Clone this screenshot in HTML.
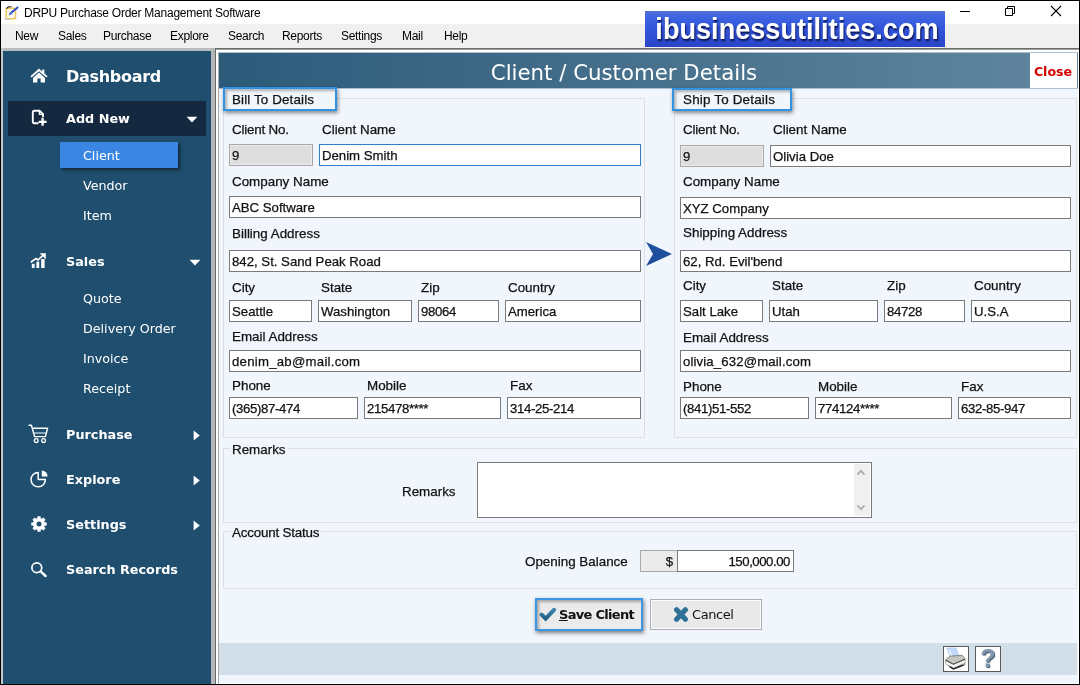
<!DOCTYPE html>
<html lang="en">
<head>
<meta charset="utf-8">
<title>DRPU Purchase Order Management Software</title>
<style>
*{box-sizing:border-box;margin:0;padding:0}
html,body{width:1080px;height:685px;overflow:hidden;background:#fff}
body{position:relative;will-change:transform;font-family:"Liberation Sans",sans-serif;font-size:13px;color:#000}
.abs{position:absolute}
#frame{position:absolute;left:0;top:0;width:1080px;height:685px;border:1px solid #000;pointer-events:none;z-index:50}
#titlebar{position:absolute;left:1px;top:1px;width:1079px;height:23px;background:#fff}
#title{position:absolute;left:23px;top:5px;font-size:12px;line-height:15px;letter-spacing:-0.25px;white-space:nowrap;color:#000}
#menubar{position:absolute;left:1px;top:24px;width:1079px;height:24px;background:#f0f0f0}
#menubar span{position:absolute;top:5px;font-size:12px;line-height:15px;letter-spacing:-0.3px;white-space:nowrap;color:#000}
#undermenu{position:absolute;left:1px;top:48px;width:1078px;height:3px;background:#b9bdc0}
#leftstrip{position:absolute;left:1px;top:48px;width:2px;height:636px;background:#c5c9cc}
#mainborder{position:absolute;left:215px;top:48px;width:864px;height:636px;border-left:1px solid #696969;border-top:1px solid #6c6c6c;background:#fff;box-shadow:inset 0 1px 0 #9c9c9c}
#banner{position:absolute;left:645px;top:11px;width:300px;height:36px;background:linear-gradient(#5672cc 0%,#4166e2 12%,#3357dc 45%,#2a45c6 100%);overflow:hidden}
#banner span{position:absolute;left:-7.6px;width:320px;text-align:center;top:0.2px;font-weight:bold;font-size:29.5px;line-height:36px;color:#fff;white-space:nowrap;text-shadow:1px 2px 2px #0a1550;transform:scaleX(0.919);transform-origin:50% 50%}
/* sidebar */
#sidebar{position:absolute;left:3px;top:51px;width:208px;height:633px;background:#1f4e6e}
.nav{position:absolute;left:63px;margin-top:1px;font-family:"DejaVu Sans","Liberation Sans",sans-serif;font-weight:bold;color:#fff;font-size:12.8px;line-height:16px;white-space:nowrap}
.sub{position:absolute;left:80px;margin-top:1px;font-family:"DejaVu Sans","Liberation Sans",sans-serif;color:#fff;font-size:12.7px;line-height:16px;white-space:nowrap}
/* main */
#split{position:absolute;left:211px;top:48px;width:4px;height:636px;background:#b4b8bb}
#main{position:absolute;left:219px;top:52px;width:859px;height:631px;background:#f1f6fd}
#header{position:absolute;left:0px;top:1px;width:859px;height:35px;background:linear-gradient(90deg,#2c5b7a 0%,#62869f 100%);box-shadow:0 -1px 0 rgba(70,110,140,.4),0 1px 0 rgba(70,110,140,.4)}
#header .ht{position:absolute;left:0;top:1px;width:810px;text-align:center;font-family:"DejaVu Sans","Liberation Sans",sans-serif;font-size:21.3px;line-height:37px;color:#fff;white-space:nowrap}
#closebtn{position:absolute;left:811px;top:0px;width:47px;height:35px;padding-right:1px;background:#fff;font-family:"DejaVu Sans","Liberation Sans",sans-serif;font-weight:bold;font-size:12.6px;color:#d40000;text-align:center;line-height:37px}
.gb{position:absolute;border:1px solid #dcdfe4}
.lbl{position:absolute;margin-top:0.6px;-webkit-text-stroke:0.25px #111;font-size:13.4px;line-height:16px;white-space:nowrap;color:#111}
.fld{position:absolute;-webkit-text-stroke:0.25px #111;height:22px;border:1px solid #7a7a7a;background:#fff;font-size:13.2px;line-height:22px;padding-left:2px;white-space:nowrap;overflow:hidden;color:#111}
.fld.gray{background:#dedede;border-color:#a8a8a8;box-shadow:inset 0 0 0 1px #ececec}
.fld.focus{border-color:#2f7ec6}
.legend{position:absolute;margin-top:0.6px;-webkit-text-stroke:0.25px #111;font-size:13.4px;line-height:16px;white-space:nowrap;color:#111;background:#f0f5fc;padding:0 2px}
.hl{position:absolute;border:2px solid #3392e2;box-shadow:1px 2px 4px rgba(0,0,0,.45),inset 2px 2px 3px rgba(0,0,0,.28);background:#f1f6fd}
#footer{position:absolute;left:0;top:591px;width:858px;height:31.6px;background:#d2dee8}
.btxt{margin-top:1px;font-family:"DejaVu Sans","Liberation Sans",sans-serif;font-size:13px;line-height:16px;white-space:nowrap;color:#111}
</style>
</head>
<body>
<div id="titlebar">
  <svg class="abs" style="left:1px;top:3px" width="18" height="17" viewBox="0 0 18 17">
    <path d="M4.2 4.2H12.4Q13.6 4.2 13.6 5.4V13.6Q13.6 14.8 12.4 14.8H5.2Q4 14.8 4 13.6Z" fill="#fbf6e6" stroke="#ecc95a" stroke-width="1.4"/>
    <path d="M4.6 4.6Q6.4 1.8 9.6 3" fill="none" stroke="#3a3a30" stroke-width="1.3"/>
    <path d="M15.6 3.4L8 9.8" stroke="#2a46c8" stroke-width="1.9" stroke-linecap="round"/>
    <path d="M9.2 8.2L6.6 11.8 10.4 10.2Z" fill="#6f8ee8"/>
    <path d="M2.2 14.6Q5 16.2 8 15.2" fill="none" stroke="#c9cde0" stroke-width="1.2"/>
  </svg>
  <div id="title">DRPU Purchase Order Management Software</div>
  <svg class="abs" style="left:958px;top:4px" width="12" height="12" viewBox="0 0 12 12"><path d="M1 6.5h10" stroke="#000" stroke-width="1"/></svg>
  <svg class="abs" style="left:1003px;top:4px" width="12" height="12" viewBox="0 0 12 12"><path d="M1.5 3.5h7v7h-7z M3.5 3.5v-2h7v7h-2" stroke="#000" stroke-width="1" fill="none"/></svg>
  <svg class="abs" style="left:1049px;top:4px" width="12" height="12" viewBox="0 0 12 12"><path d="M1 1l10 10M11 1L1 11" stroke="#000" stroke-width="1.1"/></svg>
</div>
<div id="menubar">
  <span style="left:14px">New</span>
  <span style="left:57px">Sales</span>
  <span style="left:102px">Purchase</span>
  <span style="left:169px">Explore</span>
  <span style="left:227px">Search</span>
  <span style="left:281px">Reports</span>
  <span style="left:340px">Settings</span>
  <span style="left:401px">Mail</span>
  <span style="left:443px">Help</span>
</div>
<div id="undermenu"></div>
<div id="banner"><span>ibusinessutilities.com</span></div>

<div id="sidebar">
  <div class="abs" style="left:5px;top:50px;width:198px;height:35px;background:#14283f"></div>

  <!-- icons -->
  <svg class="abs" style="left:27px;top:17px" width="18" height="15" viewBox="0 0 18 15"><path d="M9 0.6L0.4 8.2 1.7 9.6 9 3.2 16.3 9.6 17.6 8.2 14.3 5.3V1.6H12.2V3.4Z" fill="#fff"/><path d="M9 4.6L3 9.9V14.6H7.4V10.6H10.6V14.6H15V9.9Z" fill="#fff"/></svg>
  <svg class="abs" style="left:28px;top:58px" width="17" height="18" viewBox="0 0 17 18"><path d="M7.5 14.2H3.2a1.4 1.4 0 0 1-1.4-1.4V3.2a1.4 1.4 0 0 1 1.4-1.4H8.6L12 5.2V8" fill="none" stroke="#fff" stroke-width="1.9"/><path d="M8.4 2V5.4H12" fill="none" stroke="#fff" stroke-width="1.4"/><path d="M11.6 8.8V16.8M7.6 12.8H15.6" stroke="#fff" stroke-width="2.3"/></svg>
  <svg class="abs" style="left:183px;top:65px" width="12" height="7" viewBox="0 0 12 7"><path d="M0.6 0.8H11.4L6 6.4Z" fill="#fff"/></svg>
  <svg class="abs" style="left:27px;top:201px" width="17" height="17" viewBox="0 0 17 17"><rect x="1.8" y="11.8" width="2.8" height="4.2" fill="#fff"/><rect x="6.4" y="9.6" width="2.8" height="6.4" fill="#fff"/><rect x="11.2" y="7" width="3.4" height="9" fill="#fff"/><path d="M0.8 10.2L6 6.6 8 8 13 3.4" fill="none" stroke="#fff" stroke-width="1.7"/><path d="M9.6 1.2H15.8V7.2Z" fill="#fff"/></svg>
  <svg class="abs" style="left:186px;top:208px" width="12" height="7" viewBox="0 0 12 7"><path d="M0.6 0.8H11.4L6 6.4Z" fill="#fff"/></svg>
  <svg class="abs" style="left:25px;top:373px" width="21" height="20" viewBox="0 0 21 20"><path d="M0.5 1.2H3.4L6.6 12.6H17.4L19.6 4.2H4.4" fill="none" stroke="#fff" stroke-width="1.4" stroke-linejoin="round"/><path d="M6 9H18.2" stroke="#fff" stroke-width="1"/><circle cx="8.2" cy="16.6" r="1.9" fill="none" stroke="#fff" stroke-width="1.3"/><circle cx="15.6" cy="16.6" r="1.9" fill="none" stroke="#fff" stroke-width="1.3"/></svg>
  <svg class="abs" style="left:190px;top:379px" width="8" height="11" viewBox="0 0 8 11"><path d="M0.6 0.5L6.8 5.5 0.6 10.5Z" fill="#fff"/></svg>
  <svg class="abs" style="left:26px;top:419px" width="20" height="18" viewBox="0 0 20 18"><path d="M9.2 2.4A7.2 7.2 0 1 0 16.4 9.6H9.2Z" fill="none" stroke="#fff" stroke-width="1.5" stroke-linejoin="round"/><path d="M12 7V1.2A5.8 5.8 0 0 1 17.8 7Z" fill="#fff" transform="translate(0.8,-0.6)"/></svg>
  <svg class="abs" style="left:190px;top:424px" width="8" height="11" viewBox="0 0 8 11"><path d="M0.6 0.5L6.8 5.5 0.6 10.5Z" fill="#fff"/></svg>
  <svg class="abs" style="left:27.5px;top:464.8px" width="16" height="16" viewBox="0 0 16 16"><path fill-rule="evenodd" d="M6.26 2.36 L6.43 0.26 L9.57 0.26 L9.74 2.36 L10.75 2.78 L12.36 1.42 L14.58 3.64 L13.22 5.25 L13.64 6.26 L15.74 6.43 L15.74 9.57 L13.64 9.74 L13.22 10.75 L14.58 12.36 L12.36 14.58 L10.75 13.22 L9.74 13.64 L9.57 15.74 L6.43 15.74 L6.26 13.64 L5.25 13.22 L3.64 14.58 L1.42 12.36 L2.78 10.75 L2.36 9.74 L0.26 9.57 L0.26 6.43 L2.36 6.26 L2.78 5.25 L1.42 3.64 L3.64 1.42 L5.25 2.78Z M8 5.5A2.5 2.5 0 1 0 8 10.5 2.5 2.5 0 1 0 8 5.5Z" fill="#fff"/></svg>
  <svg class="abs" style="left:190px;top:469px" width="8" height="11" viewBox="0 0 8 11"><path d="M0.6 0.5L6.8 5.5 0.6 10.5Z" fill="#fff"/></svg>
  <svg class="abs" style="left:27px;top:510.3px" width="18" height="17" viewBox="0 0 18 17"><circle cx="6.8" cy="6.8" r="4.9" fill="none" stroke="#fff" stroke-width="1.7"/><path d="M10.6 10.4L15.6 15" stroke="#fff" stroke-width="2.4" stroke-linecap="round"/></svg>
  <div class="nav" style="top:15px;font-size:16px;line-height:20px;letter-spacing:-0.3px">Dashboard</div>
  <div class="nav" style="top:59px">Add New</div>
  <div class="abs" style="left:57px;top:91px;width:118px;height:26px;background:#3a86e2;box-shadow:2px 2px 3px rgba(0,0,0,.5)"></div>
  <div class="sub" style="top:96px">Client</div>
  <div class="sub" style="top:126px">Vendor</div>
  <div class="sub" style="top:156px">Item</div>
  <div class="nav" style="top:202px">Sales</div>
  <div class="sub" style="top:239px">Quote</div>
  <div class="sub" style="top:269px">Delivery Order</div>
  <div class="sub" style="top:299px">Invoice</div>
  <div class="sub" style="top:329px">Receipt</div>
  <div class="nav" style="top:375px">Purchase</div>
  <div class="nav" style="top:420px">Explore</div>
  <div class="nav" style="top:465px">Settings</div>
  <div class="nav" style="top:510px">Search Records</div>
</div>
<div id="leftstrip"></div>
<div id="split"></div>
<div id="mainborder"></div>
<div class="abs" style="left:218px;top:52px;width:1px;height:632px;background:#a4a8aa"></div>

<div id="main">
  <div id="header"><div class="ht">Client / Customer Details</div><div id="closebtn">Close</div></div>

  <!-- Bill To -->
  <div class="gb" style="left:4px;top:46px;width:422px;height:340px"></div>
  <div class="hl" style="left:4px;top:35px;width:114px;height:24px"></div>
  <div class="lbl" style="left:13px;top:39px;letter-spacing:0.13px">Bill To Details</div>

  <div class="lbl" style="left:13px;top:69px;letter-spacing:-0.2px">Client No.</div>
  <div class="lbl" style="left:103px;top:69px">Client Name</div>
  <div class="fld gray" style="left:10px;top:92px;width:84px;height:22px;line-height:22px">9</div>
  <div class="fld focus" style="left:100px;top:92px;width:322px">Denim Smith</div>
  <div class="lbl" style="left:13px;top:121px">Company Name</div>
  <div class="fld" style="left:10px;top:144px;width:412px">ABC Software</div>
  <div class="lbl" style="left:13px;top:173px">Billing Address</div>
  <div class="fld" style="left:10px;top:198px;width:412px">842, St. Sand Peak Road</div>
  <div class="lbl" style="left:13px;top:227px">City</div>
  <div class="lbl" style="left:102px;top:227px">State</div>
  <div class="lbl" style="left:202px;top:227px">Zip</div>
  <div class="lbl" style="left:289px;top:227px">Country</div>
  <div class="fld" style="left:10px;top:248px;width:83px">Seattle</div>
  <div class="fld" style="left:99px;top:248px;width:94px">Washington</div>
  <div class="fld" style="left:199px;top:248px;width:81px;letter-spacing:-0.35px">98064</div>
  <div class="fld" style="left:286px;top:248px;width:136px">America</div>
  <div class="lbl" style="left:13px;top:276px">Email Address</div>
  <div class="fld" style="left:10px;top:298px;width:412px;letter-spacing:0.25px">denim_ab@mail.com</div>
  <div class="lbl" style="left:13px;top:325px">Phone</div>
  <div class="lbl" style="left:148px;top:325px">Mobile</div>
  <div class="lbl" style="left:291px;top:325px">Fax</div>
  <div class="fld" style="left:10px;top:345px;width:129px;letter-spacing:-0.35px">(365)87-474</div>
  <div class="fld" style="left:145px;top:345px;width:137px;letter-spacing:-0.35px">215478****</div>
  <div class="fld" style="left:288px;top:345px;width:134px;letter-spacing:-0.35px">314-25-214</div>

  <!-- arrow -->
  <svg class="abs" style="left:426.3px;top:189.3px" width="28" height="26" viewBox="0 0 28 26"><path d="M1 1L27 13 1 25 8 13z" fill="#1d4f9c"/></svg>

  <!-- Ship To -->
  <div class="gb" style="left:455px;top:46px;width:403px;height:340px"></div>
  <div class="hl" style="left:453px;top:35.5px;width:119.5px;height:23px"></div>
  <div class="lbl" style="left:464px;top:39px;letter-spacing:0.2px">Ship To Details</div>

  <div class="lbl" style="left:464px;top:69px;letter-spacing:-0.2px">Client No.</div>
  <div class="lbl" style="left:554px;top:69px">Client Name</div>
  <div class="fld gray" style="left:461px;top:93px;width:84px;height:22px;line-height:22px">9</div>
  <div class="fld" style="left:551px;top:93px;width:301px">Olivia Doe</div>
  <div class="lbl" style="left:464px;top:121px">Company Name</div>
  <div class="fld" style="left:461px;top:144.5px;width:391px">XYZ Company</div>
  <div class="lbl" style="left:464px;top:172px">Shipping Address</div>
  <div class="fld" style="left:461px;top:197.5px;width:391px">62, Rd. Evil'bend</div>
  <div class="lbl" style="left:464px;top:225px">City</div>
  <div class="lbl" style="left:553px;top:225px">State</div>
  <div class="lbl" style="left:668px;top:225px">Zip</div>
  <div class="lbl" style="left:755px;top:225px">Country</div>
  <div class="fld" style="left:461px;top:248px;width:83px">Salt Lake</div>
  <div class="fld" style="left:550px;top:248px;width:109px">Utah</div>
  <div class="fld" style="left:665px;top:248px;width:81px;letter-spacing:-0.35px">84728</div>
  <div class="fld" style="left:752px;top:248px;width:100px">U.S.A</div>
  <div class="lbl" style="left:464px;top:277px">Email Address</div>
  <div class="fld" style="left:461px;top:298px;width:391px;letter-spacing:0.13px">olivia_632@mail.com</div>
  <div class="lbl" style="left:464px;top:326px">Phone</div>
  <div class="lbl" style="left:599px;top:326px">Mobile</div>
  <div class="lbl" style="left:742px;top:326px">Fax</div>
  <div class="fld" style="left:461px;top:345px;width:129px;letter-spacing:-0.35px">(841)51-552</div>
  <div class="fld" style="left:596px;top:345px;width:137px;letter-spacing:-0.35px">774124****</div>
  <div class="fld" style="left:739px;top:345px;width:113px;letter-spacing:-0.35px">632-85-947</div>

  <!-- Remarks -->
  <div class="gb" style="left:4px;top:396px;width:854px;height:74.5px"></div>
  <div class="legend" style="left:11px;top:389px">Remarks</div>
  <div class="lbl" style="left:183px;top:431px">Remarks</div>
  <div class="abs" style="left:258px;top:410px;width:395px;height:56px;background:#fff;border:1px solid #7a7a7a"></div>

  <!-- Account Status -->
  <div class="gb" style="left:4px;top:479px;width:854px;height:57.5px"></div>
  <div class="legend" style="left:11px;top:472px;letter-spacing:-0.2px">Account Status</div>
  <div class="lbl" style="left:306px;top:501px">Opening Balance</div>
  <div class="fld gray" style="left:421px;top:498px;width:38px;text-align:right;padding-right:4px;background:#ebebeb">$</div>
  <div class="fld" style="left:458px;top:498px;width:117px;text-align:right;padding-right:3px;letter-spacing:-0.45px">150,000.00</div>


  <!-- textarea scrollbar -->
  <div class="abs" style="left:634.5px;top:412px;width:16px;height:52px;background:#f0f0f0"></div>
  <svg class="abs" style="left:637.3px;top:417px" width="10" height="7" viewBox="0 0 10 7"><path d="M1.4 5.6L5 1.8 8.6 5.6" fill="none" stroke="#aeaeae" stroke-width="1.8"/></svg>
  <svg class="abs" style="left:637.3px;top:452px" width="10" height="7" viewBox="0 0 10 7"><path d="M1.4 1.4L5 5.2 8.6 1.4" fill="none" stroke="#aeaeae" stroke-width="1.8"/></svg>

  <!-- buttons -->
  <div class="abs" style="left:316px;top:546px;width:108px;height:33px;border:2px solid #3b97e3;background:#ebebeb;box-shadow:1px 2px 4px rgba(0,0,0,.5),inset 2px 2px 3px rgba(0,0,0,.3)"></div>
  <svg class="abs" style="left:320px;top:555px" width="18" height="15" viewBox="0 0 18 15"><defs><linearGradient id="tg" x1="0" y1="0" x2="0" y2="1"><stop offset="0" stop-color="#3a86ad"/><stop offset="1" stop-color="#245f84"/></linearGradient></defs><path d="M2.6 7.6L6.6 11.6 15 2.8" fill="none" stroke="url(#tg)" stroke-width="4.1" stroke-linecap="round" stroke-linejoin="miter"/></svg>
  <div class="abs btxt" style="left:340px;top:554px;font-weight:bold;letter-spacing:-0.7px"><u>S</u>ave Client</div>
  <div class="abs" style="left:431px;top:547px;width:112px;height:31px;border:1px solid #adadad;background:#e9e9e9;box-shadow:inset 0 0 0 1px #fbfbfb"></div>
  <svg class="abs" style="left:454px;top:555px" width="16" height="15" viewBox="0 0 16 15"><path d="M3.6 2.8L12.4 12.2M12.4 2.8L3.6 12.2" stroke="#2f7097" stroke-width="5.2" stroke-linecap="round"/></svg>
  <div class="abs btxt" style="left:473px;top:554px;letter-spacing:-0.45px">Cancel</div>
  <div id="footer">
    <div class="abs" style="left:724px;top:3px;width:26px;height:26px;background:#fff;border:1px solid #5a5a5a"></div>
    <div class="abs" style="left:756px;top:3px;width:26px;height:26px;background:#fff;border:1px solid #5a5a5a"></div>
    <svg class="abs" style="left:725px;top:4px" width="24" height="24" viewBox="0 0 24 24">
      <path d="M2.9 0.9H12.3L14.7 8.4 5.9 9.7Z" fill="#c2d9fb" stroke="#a3bce8" stroke-width=".5"/>
      <path d="M5.2 3.5L8 9" stroke="#eef4ff" stroke-width="1.6"/>
      <path d="M1.8 12.6L6.2 9.1 18.5 8.4 21 11.7V18L9.4 22.4 1.8 16.6Z" fill="#c6c6c0" stroke="#62625c" stroke-width=".7"/>
      <path d="M1.8 14L9.4 18 21 13V15.2L9.4 20.4 1.8 16.4Z" fill="#f6f6f4"/>
      <path d="M1.8 13.2L9.4 17.2 21 12.2" stroke="#4a4a46" stroke-width="1.1" fill="none"/>
      <path d="M5.6 19.6L9.4 21.8 19.4 17.8" stroke="#1e1e1e" stroke-width="1.4" fill="none"/>
    </svg>
    <div class="abs" style="left:756px;top:2px;width:26px;height:26px;text-align:center;font-family:'Liberation Sans',sans-serif;font-weight:bold;font-size:25px;line-height:27px;color:#7f97ad;text-shadow:1px 1px 1px #3c4f62">?</div>
  </div>
</div>
<div id="frame"></div>
</body>
</html>
